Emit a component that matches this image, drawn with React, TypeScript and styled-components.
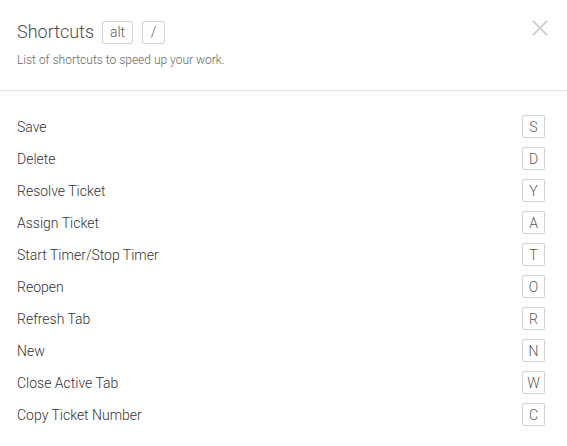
import React from "react";
import styled, { createGlobalStyle } from "styled-components";

const Global = createGlobalStyle`
  html, body { margin: 0; padding: 0; background: #fff; }
  body { font-family: Roboto, "Liberation Sans", sans-serif; }
`;

const Panel = styled.div`
  width: 567px;
  height: 446px;
  background: #fff;
  display: flex;
  flex-direction: column;
`;

const Header = styled.div`
  position: relative;
  padding: 19px 17px 0 17px;
  height: 71px;
  border-bottom: 1px solid #e3e3e3;
`;

const TitleRow = styled.div`
  display: flex;
  align-items: center;
  gap: 8px;
  height: 26px;
`;

const Title = styled.h1`
  margin: 0;
  font-size: 18px;
  font-weight: 300;
  color: #4a4a4a;
  line-height: 26px;
`;

const Key = styled.span<{ $w?: number }>`
  display: inline-flex;
  align-items: center;
  justify-content: center;
  box-sizing: border-box;
  width: ${(p) => p.$w ?? 23}px;
  height: 23px;
  padding: 0;
  border: 1px solid #d2d2d2;
  border-radius: 2px;
  font-size: 14px;
  font-weight: 300;
  color: #5a5a5a;
  background: #fff;
`;

const KeyGroup = styled.div`
  display: flex;
  gap: 9px;
`;

const Subtitle = styled.p`
  margin: 8px 0 0 0;
  font-size: 12px;
  font-weight: 300;
  color: #666;
  line-height: 14px;
`;

const Close = styled.button`
  position: absolute;
  top: 19px;
  right: 18px;
  width: 18px;
  height: 18px;
  padding: 0;
  border: 0;
  background: none;
  cursor: pointer;
  display: flex;
  align-items: center;
  justify-content: center;
`;

const List = styled.div`
  display: flex;
  flex-direction: column;
  padding: 24px 22px 0 17px;
  gap: 9px;
`;

const Row = styled.div`
  display: flex;
  align-items: center;
  justify-content: space-between;
  height: 23px;
`;

const Label = styled.span`
  font-size: 14px;
  font-weight: 300;
  color: #333;
`;

const items: [string, string][] = [
  ["Save", "S"],
  ["Delete", "D"],
  ["Resolve Ticket", "Y"],
  ["Assign Ticket", "A"],
  ["Start Timer/Stop Timer", "T"],
  ["Reopen", "O"],
  ["Refresh Tab", "R"],
  ["New", "N"],
  ["Close Active Tab", "W"],
  ["Copy Ticket Number", "C"],
];

export default function App() {
  return (
    <Panel>
      <Global />
      <Header>
        <TitleRow>
          <Title>Shortcuts</Title>
          <KeyGroup>
            <Key $w={31}>alt</Key>
            <Key>/</Key>
          </KeyGroup>
        </TitleRow>
        <Subtitle>List of shortcuts to speed up your work.</Subtitle>
        <Close aria-label="Close">
          <svg width="16" height="16" viewBox="0 0 16 16">
            <path d="M1 1 L15 15 M15 1 L1 15" stroke="#d3d3d3" strokeWidth="2" />
          </svg>
        </Close>
      </Header>
      <List>
        {items.map(([l, k]) => (
          <Row key={k}>
            <Label>{l}</Label>
            <Key>{k}</Key>
          </Row>
        ))}
      </List>
    </Panel>
  );
}
